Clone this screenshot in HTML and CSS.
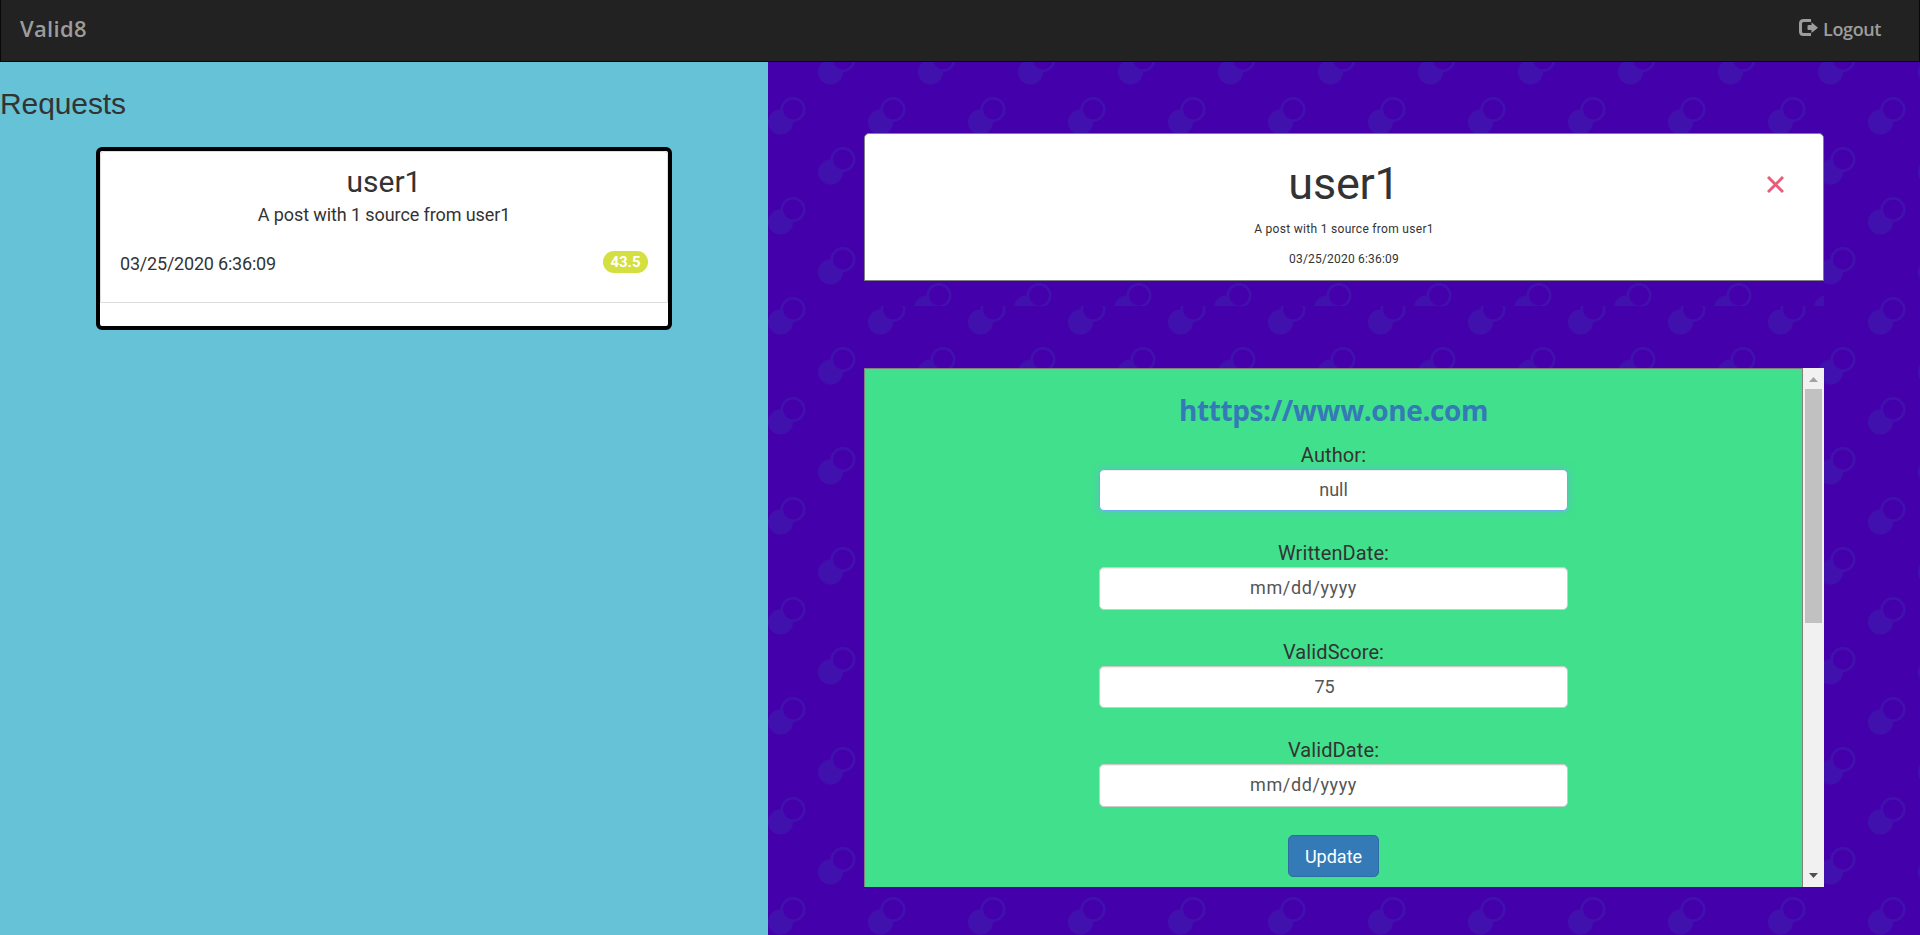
FILE: index.html
```html
<!DOCTYPE html>
<html lang="en">
<head>
<meta charset="utf-8">
<title>Valid8</title>
<link rel="stylesheet" href="styles.css">
</head>
<body>
<nav class="navbar">
  <a class="brand">Valid8</a>
  <a class="logout">
    <svg class="logout-icon" viewBox="0 0 19 17" width="19" height="17"><path d="M12 1.500H4.500Q1.500 1.500 1.500 4.500v8Q1.500 15.500 4.500 15.500H12" fill="none" stroke="#9d9d9d" stroke-width="3"/><path d="M9.500 6H12.500V3.200L19 8.700 12.500 14V11H9.500Q8.500 11 8.500 10V7Q8.500 6 9.500 6z" fill="#9d9d9d"/></svg>
    <span class="logout-text">Logout</span>
  </a>
</nav>
<main class="columns">
  <section class="requests">
    <h2 class="requests-title">Requests</h2>
    <article class="request">
      <div class="request-body">
        <h2 class="request-user">user1</h2>
        <p class="request-text">A post with 1 source from user1</p>
        <div class="request-meta"><span class="request-date">03/25/2020 6:36:09</span><span class="badge">43.5</span></div>
      </div>
    </article>
  </section>
  <section class="detail pattern">
    <div class="post-wrap pattern">
      <article class="post">
        <h1 class="post-user">user1</h1>
        <p class="post-text">A post with 1 source from user1</p>
        <p class="post-date">03/25/2020 6:36:09</p>
        <svg class="close" viewBox="0 0 17 17" width="17" height="17"><path d="M1 1L16 16M16 1L1 16" stroke="#eb5a78" stroke-width="3" fill="none"/></svg>
      </article>
    </div>
    <div class="source">
      <div class="source-form">
        <a class="source-link">htttps://www.one.com</a>
        <div class="field"><label class="label">Author:</label><div class="input focused">null</div></div>
        <div class="field"><label class="label">WrittenDate:</label><div class="input tall"><span class="date">mm/dd/yyyy</span></div></div>
        <div class="field"><label class="label">ValidScore:</label><div class="input"><span class="score">75</span></div></div>
        <div class="field"><label class="label">ValidDate:</label><div class="input tall"><span class="date">mm/dd/yyyy</span></div></div>
        <button class="update">Update</button>
      </div>
      <div class="scrollbar">
        <svg class="arrow" viewBox="0 0 21 21" width="21" height="21"><path d="M6 14L10.500 9 15 14z" fill="#a3a3a3"/></svg>
        <div class="thumb"></div>
        <svg class="arrow arrow-down" viewBox="0 0 21 21" width="21" height="21"><path d="M6 7L10.500 12 15 7z" fill="#505050"/></svg>
      </div>
    </div>
  </section>
</main>
</body>
</html>
```
FILE: styles.css
```css
* { box-sizing: border-box; }
body { margin: 0; height: 935px; overflow: hidden; display: flex; flex-direction: column; font-family: Roboto, sans-serif; font-size: 18px; color: #333; }
h1, h2, p { margin: 0; font-weight: 400; }
.navbar { height: 62px; flex: none; display: flex; justify-content: space-between; background: #222; border: 1px solid #080808; border-top: 0; padding: 0 38px 0 19px; font-family: "Open Sans", sans-serif; font-weight: 600; color: #9d9d9d; }
.brand { font-size: 22px; line-height: 57px; letter-spacing: .3px; }
.logout { display: flex; align-items: center; gap: 5px; height: 55px; font-size: 18px; line-height: 24px; letter-spacing: -.4px; }
.logout-text { padding-top: 2px; }
.columns { flex: 1; display: flex; min-height: 0; }
.requests { width: 768px; background: #66c2d7; }
.requests-title { font: 400 30px/33px "Liberation Sans", Arial, sans-serif; letter-spacing: -.1px; margin: 25px 0 28px; }
.request { width: 576px; height: 183px; margin: 0 auto; background: #fff; border: 4px solid #000; border-radius: 6px; margin-top: -1px; }
.request-body { height: 152px; border: 1px solid #ddd; border-radius: 4px 4px 0 0; padding: 12px 19px 0; text-align: center; }
.request-user { font-size: 30px; line-height: 36px; }
.request-text { line-height: 26px; margin-top: 2px; letter-spacing: -.1px; }
.request-meta { display: flex; justify-content: space-between; align-items: flex-start; margin-top: 23px; line-height: 26px; }
.request-date { letter-spacing: -.2px; }
.badge { width: 45px; height: 22px; border-radius: 11px; background: #d4df40; color: #fff; font-size: 15px; font-weight: 700; line-height: 22px; }
.pattern { background-color: #40a; background-image: url("data:image/svg+xml,%3Csvg xmlns='http://www.w3.org/2000/svg' width='100' height='100'%3E%3Cdefs%3E%3Cg id='m'%3E%3Ccircle cx='12.500' cy='25' r='12.500' fill='%234111ae'/%3E%3Ccircle cx='25' cy='12.500' r='11.250' fill='%2340a' stroke='%234111ae' stroke-width='2.500'/%3E%3C/g%3E%3C/defs%3E%3Cuse href='%23m'/%3E%3Cuse href='%23m' x='50' y='50'/%3E%3C/svg%3E"); }
.detail { flex: 1; padding: 71px 96px 0; background-position: 0 35px; }
.post-wrap { height: 173px; margin-bottom: 62px; }
.post { height: 148px; position: relative; background: #fff; border: 1px solid #808080; border-radius: 5px 5px 0 0; text-align: center; padding-top: 25px; }
.post-user { font-size: 45px; line-height: 50px; letter-spacing: -.2px; }
.post-text { font-size: 12px; line-height: 18px; margin-top: 11px; letter-spacing: .3px; }
.post-date { font-size: 12px; line-height: 18px; margin-top: 12px; letter-spacing: .2px; }
.close { position: absolute; right: 39px; top: 42px; }
.source { height: 519px; display: flex; }
.source-form { flex: 1; background: #41e08c; border: 1px solid #808080; border-bottom: 0; padding-top: 23px; display: flex; flex-direction: column; align-items: center; }
.source-link { font: 700 28px/36px "Open Sans", sans-serif; letter-spacing: -.4px; color: #337ab7; margin-bottom: 13px; }
.field { width: 469px; height: 98px; text-align: center; margin-bottom: .4px; }
.label { display: block; font-size: 20px; line-height: 28px; letter-spacing: .1px; }
.input { height: 42px; background: #fff; border: 1px solid #ccc; border-radius: 5px; box-shadow: inset 0 1px 1px rgba(0,0,0,.075); line-height: 40px; color: #555; }
.tall { height: 43px; }
.focused { border-color: #66afe9; box-shadow: inset 0 1px 1px rgba(0,0,0,.075), 0 0 8px rgba(102,175,233,.6); }
.date { margin-right: 60px; letter-spacing: .6px; }
.score { margin-right: 18px; }
.update { width: 91px; height: 42px; border: 1px solid #2e6da4; border-radius: 5px; background: #337ab7; color: #fff; font: 400 18px/42px Roboto, sans-serif; padding: 0; }
.scrollbar { width: 21px; background: #f1f1f1; display: flex; flex-direction: column; }
.arrow { display: block; }
.thumb { width: 17px; height: 234px; margin: 0 2px; background: #c1c1c1; }
.arrow-down { margin-top: auto; }
```
